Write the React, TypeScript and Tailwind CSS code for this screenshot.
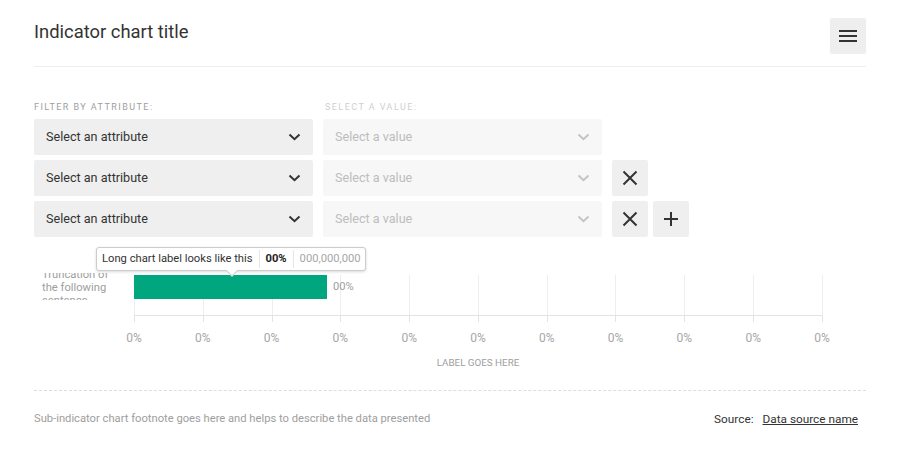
import React from 'react';

const ticks = Array.from({ length: 11 }, (_, i) => Math.round(1 + i * 68.75) + 0.5);

function Chevron({ color }: { color: string }) {
  return (
    <svg width="13" height="8" viewBox="0 0 13 8" fill="none">
      <polyline points="1.5,1.5 6.5,6.2 11.5,1.5" stroke={color} strokeWidth="2" />
    </svg>
  );
}

function CloseIcon() {
  return (
    <svg width="16" height="16" viewBox="0 0 16 16" fill="none">
      <path d="M1.5 1.5 L14.5 14.5 M14.5 1.5 L1.5 14.5" stroke="#333" strokeWidth="2" />
    </svg>
  );
}

function PlusIcon() {
  return (
    <svg width="16" height="16" viewBox="0 0 16 16" fill="none">
      <path d="M8 1 V15 M1 8 H15" stroke="#333" strokeWidth="2" />
    </svg>
  );
}

function AttributeSelect() {
  return (
    <div className="w-[279px] h-9 bg-[#efefef] rounded-[2px] pl-3 pr-[12px] flex items-center justify-between">
      <span className="text-[12.6px] text-[#333]">Select an attribute</span>
      <Chevron color="#333" />
    </div>
  );
}

function ValueSelect() {
  return (
    <div className="w-[279px] h-9 bg-[#f7f7f7] rounded-[2px] pl-3 pr-[12px] flex items-center justify-between">
      <span className="text-[12.6px] text-[#bdbdbd]">Select a value</span>
      <Chevron color="#c4c4c4" />
    </div>
  );
}

function IconButton({ children }: { children: React.ReactNode }) {
  return (
    <button className="w-9 h-9 bg-[#efefef] rounded-[2px] flex items-center justify-center">{children}</button>
  );
}

export default function App() {
  return (
    <div className="min-h-screen bg-white font-['Roboto',sans-serif] text-[#333]">
      <div className="ml-[34px] w-[832px]">
        {/* Header */}
        <header className="flex items-start justify-between pt-[18px] pb-[12px] border-b border-[#eeeeee]">
          <h1 className="mt-[1px] text-[18.4px] leading-[26px] text-[#333]">Indicator chart title</h1>
          <button className="w-9 h-9 bg-[#eeeeee] rounded-[2px] flex flex-col items-center justify-center gap-[3px]">
            <span className="w-[18px] h-[2px] bg-[#333]" />
            <span className="w-[18px] h-[2px] bg-[#333]" />
            <span className="w-[18px] h-[2px] bg-[#333]" />
          </button>
        </header>

        {/* Filters */}
        <div className="mt-[34px] flex flex-col gap-[5px]">
          <div className="flex gap-[10px] text-[9px] leading-[12px] tracking-[1.45px] uppercase mb-[1px]">
            <span className="w-[279px] text-[#9e9e9e]">Filter by attribute:</span>
            <span className="w-[279px] pl-[2px] text-[#cfcfcf]">Select a value:</span>
          </div>
          <div className="flex gap-[10px]">
            <AttributeSelect />
            <ValueSelect />
          </div>
          <div className="flex gap-[10px]">
            <AttributeSelect />
            <ValueSelect />
            <IconButton><CloseIcon /></IconButton>
          </div>
          <div className="flex gap-[10px]">
            <AttributeSelect />
            <ValueSelect />
            <div className="flex gap-[5px]">
              <IconButton><CloseIcon /></IconButton>
              <IconButton><PlusIcon /></IconButton>
            </div>
          </div>
        </div>

        {/* Chart */}
        <div className="relative mt-[28px]">
          <div className="absolute left-[62px] top-[-18px] z-10 h-[24px] bg-white border border-[#cccccc] rounded-[3px] shadow-[0_1px_3px_rgba(0,0,0,0.15)] flex items-center text-[11.2px]">
            <span className="pl-[5px] pr-[6px] text-[#333]">Long chart label looks like this</span>
            <span className="w-px h-[18px] bg-[#e6e6e6]" />
            <span className="px-[6px] font-bold text-[#222]">00%</span>
            <span className="w-px h-[18px] bg-[#e6e6e6]" />
            <span className="pl-[6px] pr-[4px] text-[#a6a6a6]">000,000,000</span>
            <span className="absolute left-[131px] bottom-[-5px] w-[8px] h-[8px] bg-white border-r border-b border-[#cccccc] rotate-45" />
          </div>

          <div className="flex">
            <div className="w-[99px] pl-[8px]">
              <div className="mt-[8px] h-[27px] overflow-hidden text-[11.2px] leading-[13px] text-[#9e9e9e]">
                <div className="-mt-[5.5px]">
                  Truncation of<br />the following<br />sentence
                </div>
              </div>
            </div>
            <div className="relative">
              <svg width="690" height="58" viewBox="0 0 690 58">
                {ticks.map((x) => (
                  <line key={x} x1={x} x2={x} y1={10} y2={57} stroke="#eeeeee" strokeWidth="1" />
                ))}
                <line x1={1} x2={689} y1={50.5} y2={50.5} stroke="#e3e3e3" strokeWidth="1" />
                {ticks.map((x) => (
                  <line key={'t' + x} x1={x} x2={x} y1={51} y2={57} stroke="#e3e3e3" strokeWidth="1" />
                ))}
                <rect x={1} y={10} width={193} height={24} fill="#00a67e" />
              </svg>
              <span className="absolute left-[200px] top-[10px] h-[24px] flex items-center text-[11.2px] text-[#9e9e9e]">00%</span>
            </div>
          </div>

          <div className="mt-[8px] ml-[80px] w-[728px] flex justify-between">
            {ticks.map((x) => (
              <span key={x} className="w-[40px] text-center text-[12px] leading-[14px] text-[#a6a6a6]">0%</span>
            ))}
          </div>
          <div className="mt-[12px] ml-[100px] w-[688px] text-center text-[9.8px] leading-[12px] text-[#9e9e9e] uppercase">
            Label goes here
          </div>
        </div>

        {/* Footer */}
        <div className="mt-[21px] border-t border-dashed border-[#dddddd]" />
        <div className="mt-[20px] flex justify-between items-center pr-[8px] leading-[16px]">
          <span className="text-[11.2px] text-[#9e9e9e]">Sub-indicator chart footnote goes here and helps to describe the data presented</span>
          <span className="text-[11.8px] text-[#333]">
            Source:<a className="ml-[9px] underline text-[#333]">Data source name</a>
          </span>
        </div>
      </div>
    </div>
  );
}
